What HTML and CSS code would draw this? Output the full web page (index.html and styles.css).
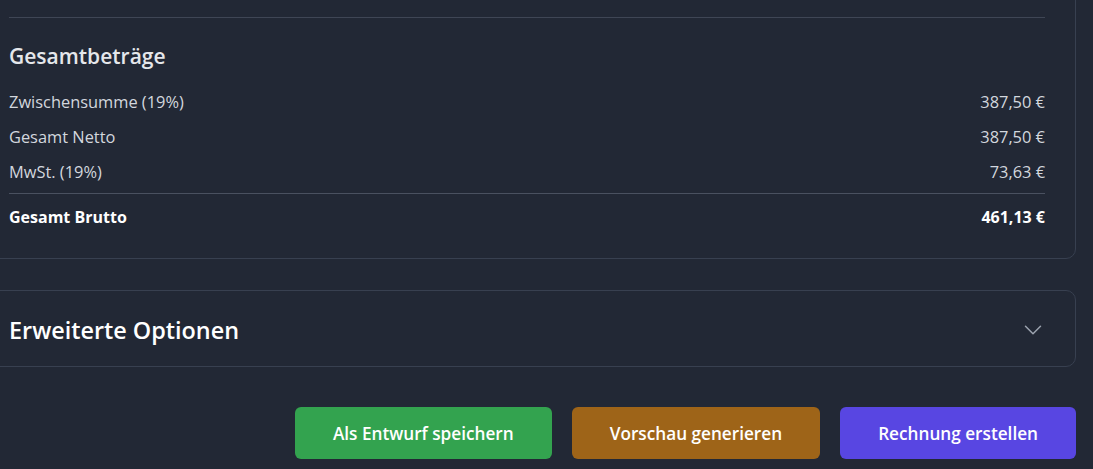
FILE: index.html
```html
<!DOCTYPE html>
<html lang="de">
<head>
<meta charset="utf-8">
<title>Rechnung</title>
<link rel="stylesheet" href="styles.css">
</head>
<body>
<div class="wrap">
  <section class="card totals-card">
    <div class="totals">
      <h2 class="totals-title">Gesamtbeträge</h2>
      <div class="rows">
        <div class="row"><span>Zwischensumme (19%)</span><span>387,50 €</span></div>
        <div class="row"><span>Gesamt Netto</span><span>387,50 €</span></div>
        <div class="row"><span>MwSt. (19%)</span><span>73,63 €</span></div>
      </div>
      <div class="row total"><span>Gesamt Brutto</span><span>461,13 €</span></div>
    </div>
  </section>

  <section class="card options-card">
    <h2 class="options-title">Erweiterte Optionen</h2>
    <svg class="chevron" viewBox="0 0 24 24" width="24" height="24" fill="none" stroke="currentColor" stroke-width="1.5" stroke-linecap="round" stroke-linejoin="round"><path d="m19.5 8.25-7.5 7.5-7.5-7.5"/></svg>
  </section>

  <div class="actions">
    <button class="btn btn-green">Als Entwurf speichern</button>
    <button class="btn btn-orange">Vorschau generieren</button>
    <button class="btn btn-purple">Rechnung erstellen</button>
  </div>
</div>
</body>
</html>
```

FILE: styles.css
```css
* { box-sizing: border-box; }
html, body {
  margin: 0;
  padding: 0;
  background: #222835;
  overflow: hidden;
}
body {
  font-family: "Open Sans", "Noto Sans", "Liberation Sans", sans-serif;
  color: #d1d5db;
  width: 1093px;
  height: 469px;
}
.wrap {
  margin-left: -22px;
  margin-top: -20px;
  width: 1098px;
  display: flex;
  flex-direction: column;
}
.card {
  border: 1px solid #384050;
  border-radius: 10px;
  background: #222835;
}
.totals-card {
  padding: 36px 30px 29px;
  border-top-left-radius: 0;
  border-top-right-radius: 0;
}
.totals {
  border-top: 1px solid #3f4655;
  padding-top: 24px;
}
.totals-title {
  margin: 0 0 20px;
  font-size: 21px;
  line-height: 28px;
  font-weight: 600;
  color: #e5e7eb;
}
.rows {
  display: flex;
  flex-direction: column;
  gap: 11px;
  padding-bottom: 9px;
  border-bottom: 1px solid #4a5160;
}
.row {
  display: flex;
  justify-content: space-between;
  font-size: 16.4px;
  line-height: 24px;
  color: #d3d7de;
}
.row.total {
  padding-top: 11px;
  font-size: 16px;
  font-weight: 700;
  color: #ffffff;
}
.options-card {
  margin-top: 31px;
  height: 77px;
  padding: 0 30px;
  display: flex;
  align-items: center;
  justify-content: space-between;
}
.options-title {
  margin: 2px 0 0;
  font-size: 23.4px;
  line-height: 32px;
  font-weight: 600;
  color: #ffffff;
}
.chevron {
  color: #9ca3af;
  margin-top: 2px;
}
.actions {
  margin-top: 40px;
  display: flex;
  justify-content: flex-end;
  gap: 20px;
}
.btn {
  height: 52px;
  border: none;
  border-radius: 6px;
  padding: 0 38px;
  font-family: inherit;
  font-size: 17.2px;
  font-weight: 600;
  color: #ffffff;
  cursor: pointer;
}
.btn-green { background: #33a34f; }
.btn-orange { background: #9e6418; }
.btn-purple { background: #5846e2; }
```
